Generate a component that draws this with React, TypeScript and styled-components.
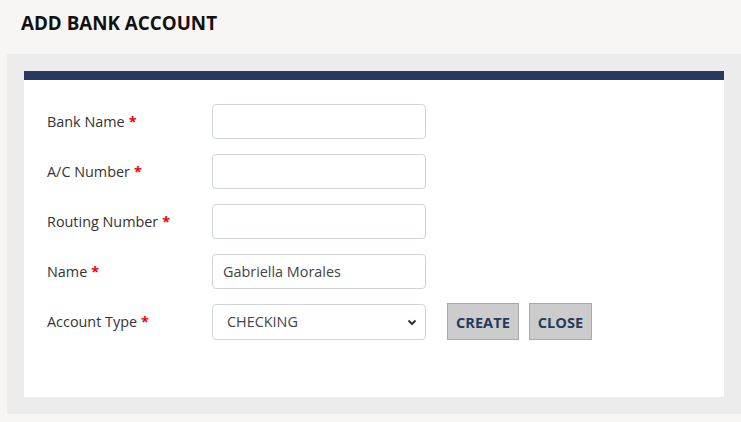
import React from "react";
import styled, { createGlobalStyle } from "styled-components";

const Global = createGlobalStyle`
  html, body { margin: 0; padding: 0; background: #f7f6f4; }
  body { font-family: "Open Sans", "Noto Sans", sans-serif; }
  * { box-sizing: border-box; }
`;

const Page = styled.div`
  width: 741px;
  height: 422px;
  overflow: hidden;
  background: #f7f6f4;
`;

const Title = styled.h1`
  margin: 0;
  padding: 10px 0 0 21px;
  height: 54px;
  font-size: 18.8px;
  font-weight: 700;
  color: #111;
`;

const Panel = styled.div`
  margin-left: 7px;
  width: 736px;
  padding: 17px 19px 17px 17px;
  background: #ececec;
`;

const Card = styled.div`
  background: #fff;
  border-top: 9px solid #263a5e;
  height: 326px;
  padding: 24px 0 0 23px;
`;

const Row = styled.div`
  display: flex;
  align-items: center;
  height: 35px;
  margin-bottom: 15px;
`;

const Label = styled.label`
  width: 165px;
  font-size: 14.4px;
  color: #333;
  margin-top: -1px;
`;

const Star = styled.span`
  color: #e00;
  font-weight: 700;
  margin-left: 4px;
`;

const Input = styled.input`
  width: 214px;
  height: 35px;
  border: 1px solid #ced4da;
  border-radius: 4px;
  padding: 0 10px;
  font-family: inherit;
  font-size: 14.4px;
  color: #444;
  outline: none;
`;

const SelectBox = styled.div`
  position: relative;
  width: 214px;
  height: 36px;
  border: 1px solid #ced4da;
  border-radius: 4px;
  display: flex;
  align-items: center;
  padding: 0 14px;
  font-size: 14.4px;
  color: #444;
`;

const Chevron = styled.svg`
  position: absolute;
  right: 8px;
  top: 14px;
`;

const Button = styled.button`
  height: 37px;
  margin-left: ${(p: { $gap: number }) => p.$gap}px;
  padding: 0 8px;
  background: #cccccc;
  border: 1px solid #a9a9a9;
  font-family: inherit;
  font-size: 14.6px;
  font-weight: 700;
  color: #263a5e;
`;

const fields = [
  { label: "Bank Name", value: "" },
  { label: "A/C Number", value: "" },
  { label: "Routing Number", value: "" },
  { label: "Name", value: "Gabriella Morales" },
];

export default function App() {
  return (
    <Page>
      <Global />
      <Title>ADD BANK ACCOUNT</Title>
      <Panel>
        <Card>
          {fields.map((f) => (
            <Row key={f.label}>
              <Label>
                {f.label}
                <Star>*</Star>
              </Label>
              <Input defaultValue={f.value} />
            </Row>
          ))}
          <Row>
            <Label>
              Account Type<Star>*</Star>
            </Label>
            <SelectBox>
              CHECKING
              <Chevron width="10" height="7" viewBox="0 0 10 7">
                <path d="M1.5 1.5 L5 5 L8.5 1.5" fill="none" stroke="#333" strokeWidth="2" />
              </Chevron>
            </SelectBox>
            <Button $gap={21}>CREATE</Button>
            <Button $gap={10}>CLOSE</Button>
          </Row>
        </Card>
      </Panel>
    </Page>
  );
}
